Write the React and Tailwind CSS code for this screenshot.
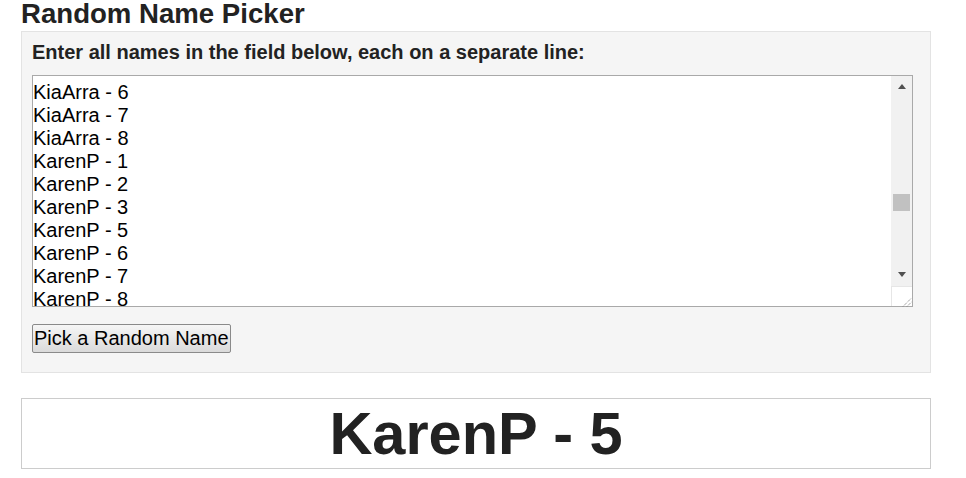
export default function App() {
  const lines = [
    "KiaArra - 6",
    "KiaArra - 7",
    "KiaArra - 8",
    "KarenP - 1",
    "KarenP - 2",
    "KarenP - 3",
    "KarenP - 5",
    "KarenP - 6",
    "KarenP - 7",
    "KarenP - 8",
  ];
  return (
    <div className="ml-[21px] w-[910px] font-['Liberation_Sans',Arial,sans-serif] text-[#222]">
      <h1 className="text-[27.6px] font-bold leading-[28px] mb-[3px]">Random Name Picker</h1>
      <div className="border border-[#e3e3e3] bg-[#f5f5f5] pl-[10px] pt-[9px] pb-[19px]">
        <div className="text-[20px] font-bold leading-[22px] mb-[12px]">
          Enter all names in the field below, each on a separate line:
        </div>
        <div className="flex w-[881px] h-[232px] border border-[#a9a9a9] bg-white">
          <div className="flex-1 overflow-hidden pt-[5px] text-[20px] leading-[23px] text-black">
            {lines.map((l) => (
              <div key={l} className="whitespace-nowrap">{l}</div>
            ))}
          </div>
          <div className="flex flex-col w-[21px] bg-[#f1f1f1]">
            <div className="h-[20px] flex items-center justify-center">
              <div className="w-0 h-0 border-x-[4.5px] border-x-transparent border-b-[5px] border-b-[#505050]" />
            </div>
            <div className="flex-1">
              <div className="mt-[98px] ml-[2px] w-[17px] h-[17px] bg-[#c1c1c1]" />
            </div>
            <div className="h-[20px] flex justify-center pt-[6px]">
              <div className="w-0 h-0 border-x-[4.5px] border-x-transparent border-t-[5px] border-t-[#505050]" />
            </div>
            <div className="h-[20px] bg-white border-l border-t border-[#e6e6e6]">
              <svg width="20" height="20" viewBox="0 0 20 20">
                <line x1="11" y1="19.5" x2="19.5" y2="11" stroke="#777" strokeWidth="1" strokeDasharray="1 1" />
                <line x1="15" y1="19.5" x2="19.5" y2="15" stroke="#777" strokeWidth="1" strokeDasharray="1 1" />
              </svg>
            </div>
          </div>
        </div>
        <button className="mt-[17px] h-[29px] px-[1px] border border-[#8a8a8a] rounded-[2px] bg-linear-to-b from-[#f6f6f6] to-[#dadada] text-[20px] leading-[23px] text-black">
          Pick a Random Name
        </button>
      </div>
      <div className="mt-[25px] h-[71px] border border-[#cccccc] bg-white text-center text-[59.5px] font-bold leading-[69px] text-[#222]">
        KarenP - 5
      </div>
    </div>
  );
}
